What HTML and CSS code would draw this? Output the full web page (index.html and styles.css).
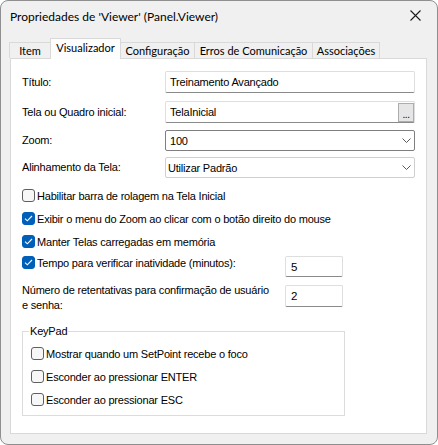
FILE: index.html
```html
<!DOCTYPE html>
<html lang="pt">
<head>
<meta charset="utf-8">
<title>Propriedades de 'Viewer'</title>
<link rel="stylesheet" href="styles.css">
</head>
<body>
<div class="window">
  <div class="titlebar">
    <span class="title">Propriedades de 'Viewer' (Panel.Viewer)</span>
    <svg class="close" width="11" height="11" viewBox="0 0 11 11"><path d="M0.5 0.5 L10.5 10.5 M10.5 0.5 L0.5 10.5" stroke="#1a1a1a" stroke-width="1.1" fill="none"/></svg>
  </div>
  <div class="tabs">
    <div class="tab t-item">Item</div>
    <div class="tab tab-active t-vis">Visualizador</div>
    <div class="tab t-conf">Configuração</div>
    <div class="tab t-err">Erros de Comunicação</div>
    <div class="tab t-assoc">Associações</div>
  </div>
  <div class="panel">
    <div class="form-row r1">
      <span class="label">Título:</span>
      <div class="textbox">Treinamento Avançado</div>
    </div>
    <div class="form-row r2">
      <span class="label">Tela ou Quadro inicial:</span>
      <div class="textbox with-btn">TelaInicial<span class="dots-btn">...</span></div>
    </div>
    <div class="form-row r3">
      <span class="label">Zoom:</span>
      <div class="combo combo-dark">100<svg class="chev" width="9" height="5" viewBox="0 0 9 5"><path d="M0.5 0.5 L4.5 4.5 L8.5 0.5" stroke="#5a5a5a" fill="none"/></svg></div>
    </div>
    <div class="form-row r4">
      <span class="label">Alinhamento da Tela:</span>
      <div class="combo">Utilizar Padrão<svg class="chev" width="9" height="5" viewBox="0 0 9 5"><path d="M0.5 0.5 L4.5 4.5 L8.5 0.5" stroke="#5a5a5a" fill="none"/></svg></div>
    </div>

    <div class="checks">
      <div class="check-row"><span class="box"></span><span>Habilitar barra de rolagem na Tela Inicial</span></div>
      <div class="check-row"><span class="box checked"><svg width="9" height="7" viewBox="0 0 9 7"><path d="M1 3.6 L3.3 5.8 L8 1" stroke="#fff" stroke-width="1.1" fill="none"/></svg></span><span>Exibir o menu do Zoom ao clicar com o botão direito do mouse</span></div>
      <div class="check-row"><span class="box checked"><svg width="9" height="7" viewBox="0 0 9 7"><path d="M1 3.6 L3.3 5.8 L8 1" stroke="#fff" stroke-width="1.1" fill="none"/></svg></span><span>Manter Telas carregadas em memória</span></div>
    </div>

    <div class="num-row tempo">
      <div class="check-row inline"><span class="box checked"><svg width="9" height="7" viewBox="0 0 9 7"><path d="M1 3.6 L3.3 5.8 L8 1" stroke="#fff" stroke-width="1.1" fill="none"/></svg></span><span>Tempo para verificar inatividade (minutos):</span></div>
      <div class="textbox small">5</div>
    </div>
    <div class="num-row retry">
      <span class="label wrap">Número de retentativas para confirmação de usuário<br>e senha:</span>
      <div class="textbox small tall">2</div>
    </div>

    <fieldset class="group">
      <legend>KeyPad</legend>
      <div class="check-row"><span class="box"></span><span>Mostrar quando um SetPoint recebe o foco</span></div>
      <div class="check-row"><span class="box"></span><span>Esconder ao pressionar ENTER</span></div>
      <div class="check-row"><span class="box"></span><span>Esconder ao pressionar ESC</span></div>
    </fieldset>
  </div>
</div>
</body>
</html>
```

FILE: styles.css
```css
* { box-sizing: border-box; }
html, body { margin: 0; padding: 0; background: #ffffff; }

.window {
  width: 438px;
  height: 445px;
  border: 1px solid #8f8f8f;
  border-radius: 8px;
  background: #f0f0f0;
  overflow: hidden;
  font-family: "Liberation Sans", Arial, sans-serif;
  font-size: 11px;
  letter-spacing: -0.2px;
  color: #000;
}

.titlebar {
  height: 37px;
  display: flex;
  align-items: flex-start;
  justify-content: space-between;
  padding: 8px 9px 0 9px;
}
.title {
  font-family: Lato, "Liberation Sans", sans-serif;
  font-size: 12px;
  line-height: 15px;
  letter-spacing: 0;
  color: #000;
}
.close { margin-top: 1px; margin-right: 7px; }

.tabs {
  height: 20px;
  display: flex;
  align-items: flex-end;
  padding-left: 8px;
  font-family: Lato, "Liberation Sans", sans-serif;
  font-size: 11px;
  letter-spacing: 0;
}
.tab {
  height: 16px;
  line-height: 15px;
  text-align: center;
  background: #f0f0f0;
  border: 1px solid #d9d9d9;
  border-bottom: none;
  margin-right: -1px;
  white-space: nowrap;
}
.tab-active {
  height: 21px;
  line-height: 17px;
  background: #fdfdfd;
  position: relative;
  z-index: 1;
  margin-bottom: -1px;
}
.t-item { width: 42px; }
.t-vis { width: 71px; }
.t-conf { width: 75px; }
.t-err { width: 119px; }
.t-assoc { width: 68px; }

.panel {
  margin-left: 9px;
  width: 417px;
  height: 376px;
  background: #ffffff;
  border: 1px solid #d9d9d9;
  padding: 12px 11px 0 11px;
  display: flex;
  flex-direction: column;
}

.form-row {
  display: grid;
  grid-template-columns: 143px 250px;
  align-items: center;
}
.r1 { height: 22px; }
.r2 { height: 22px; margin-top: 8px; }
.r3 { height: 21px; margin-top: 7px; }
.r4 { height: 21px; margin-top: 6px; }

.label { line-height: 15px; }

.textbox {
  height: 100%;
  background: #fff;
  border: 1px solid #dedede;
  border-bottom-color: #8a8a8a;
  padding-left: 4px;
  display: flex;
  align-items: center;
  border-radius: 2px;
}
.dots-btn {
  margin-left: auto;
  width: 16px;
  height: 19px;
  background: #e6e6e6;
  border: 1px solid #adadad;
  display: flex;
  align-items: flex-end;
  justify-content: center;
  font-size: 10px;
  line-height: 13px;
  letter-spacing: -0.5px;
}

.combo {
  height: 100%;
  background: #fff;
  border: 1px solid #cfcfcf;
  border-radius: 2px;
  padding-left: 2px;
  display: flex;
  align-items: center;
  justify-content: space-between;
}
.combo-dark { border-color: #7f7f7f; padding-left: 4px; }
.chev { margin-right: 3px; }

.checks {
  margin-top: 6px;
  display: flex;
  flex-direction: column;
}
.check-row {
  height: 23px;
  display: flex;
  align-items: center;
  gap: 2px;
  white-space: nowrap;
}
.box {
  width: 13px;
  height: 13px;
  border: 1px solid #5f5f5f;
  border-radius: 3px;
  background: #f7f7f7;
  display: flex;
  align-items: center;
  justify-content: center;
  flex: none;
}
.box.checked {
  background: #005fb8;
  border-color: #005fb8;
}

.num-row {
  display: grid;
  grid-template-columns: 263px 58px;
  align-items: start;
}
.tempo { margin-top: 3px; height: 21px; }
.check-row.inline { height: 13px; }
.textbox.small { height: 21px; padding-left: 5px; font-size: 11.5px; }
.retry { margin-top: 6px; }
.wrap { line-height: 15px; }
.textbox.tall { height: 22px; margin-top: 2px; }

.group {
  margin: 12px 0 0 0;
  width: 323px;
  border: 1px solid #dcdcdc;
  padding: 4px 8px 4px 8px;
  min-width: 0;
}
.group legend {
  margin-left: -2px;
  padding: 0 1px;
  line-height: 13px;
  font-size: 11px;
}
```
